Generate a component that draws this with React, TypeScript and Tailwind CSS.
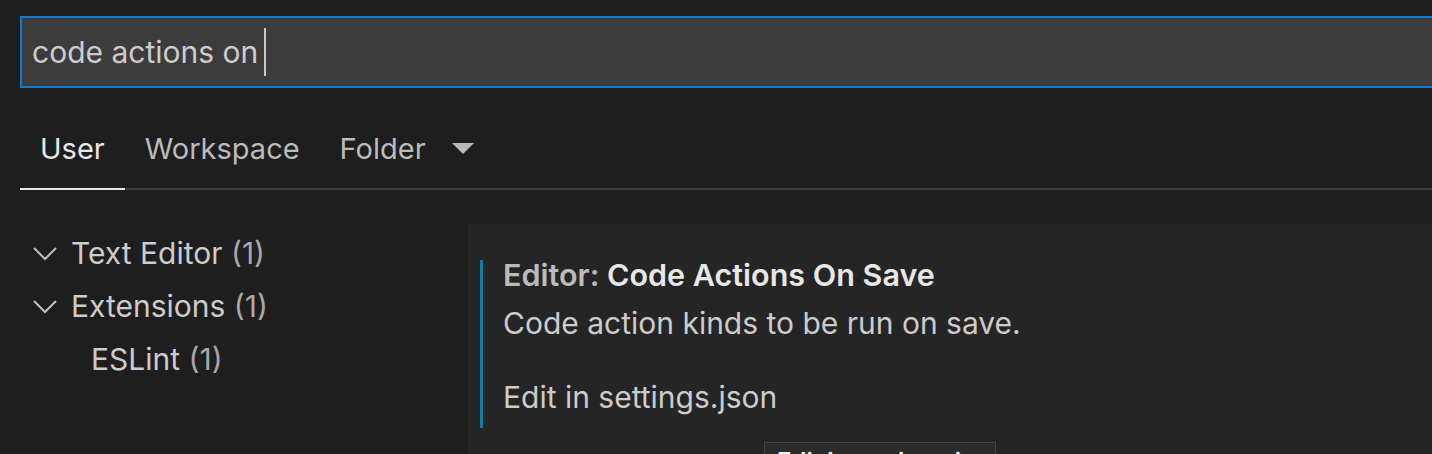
export default function App() {
  return (
    <div className="relative w-[1432px] h-[454px] overflow-hidden bg-[#1e1e1e] font-['Inter','Noto_Sans',sans-serif] text-[#cccccc]">
      {/* search */}
      <div className="pt-4 pl-5">
        <div className="flex h-[72px] w-[1430px] items-center border-2 border-[#0e7ad3] bg-[#3c3c3c] pl-[10px]">
          <span className="text-[30px] text-[#cccccc]">code actions on</span>
          <span className="ml-[6px] h-[48px] w-[2px] bg-[#c8c8c8]"></span>
        </div>
      </div>

      {/* tabs */}
      <div className="ml-5 mt-[22px] flex border-b-2 border-[#3a3a3a]">
        <div className="-mb-[2px] flex h-[80px] items-center border-b-2 border-[#e7e7e7] px-5 text-[29px] text-[#e7e7e7]">User</div>
        <div className="flex h-[78px] items-center px-5 text-[29px] text-[#bbbbbb]">Workspace</div>
        <div className="flex h-[78px] items-center pl-5 text-[29px] text-[#bbbbbb]">
          Folder
          <svg className="ml-[26px]" width="22" height="12" viewBox="0 0 22 12">
            <path d="M0 0 L22 0 L11 11 Z" fill="#bbbbbb" />
          </svg>
        </div>
      </div>

      {/* body */}
      <div className="flex">
        <div className="w-[468px] shrink-0 pt-[37px] text-[30px]">
          <div className="flex h-[53px] items-center">
            <svg className="ml-[33px] mr-[14px]" width="24" height="14" viewBox="0 0 24 14">
              <path d="M1 1 L12 12 L23 1" fill="none" stroke="#c0c0c0" strokeWidth="2" />
            </svg>
            <span>Text Editor <span className="text-[#a8a8a8]">(1)</span></span>
          </div>
          <div className="flex h-[53px] items-center">
            <svg className="ml-[33px] mr-[14px]" width="24" height="14" viewBox="0 0 24 14">
              <path d="M1 1 L12 12 L23 1" fill="none" stroke="#c0c0c0" strokeWidth="2" />
            </svg>
            <span>Extensions <span className="text-[#a8a8a8]">(1)</span></span>
          </div>
          <div className="flex h-[53px] items-center pl-[91px]">
            <span>ESLint <span className="text-[#a8a8a8]">(1)</span></span>
          </div>
        </div>

        <div className="mt-[34px] h-[240px] flex-1 bg-[#252526] pl-3 pt-9">
          <div className="flex">
            <div className="w-[3px] bg-[#0f7ea3]"></div>
            <div className="pl-5 pb-4 text-[30px]">
              <div className="flex h-[30px] items-center text-[30.5px] font-semibold">
                <span className="text-[#bbbbbb]">Editor:&nbsp;</span>
                <span className="text-[#e7e7e7]">Code Actions On Save</span>
              </div>
              <div className="mt-[18px] flex h-[30px] items-center">Code action kinds to be run on save.</div>
              <div className="mt-[44px] flex h-[30px] items-center">Edit in settings.json</div>
            </div>
          </div>
        </div>
      </div>

      {/* tooltip */}
      <div className="absolute left-[764px] top-[442px] h-[40px] w-[232px] overflow-hidden whitespace-nowrap border border-[#454545] bg-[#2b2b2b] pl-[12px] pt-[7px] text-[24px] font-semibold leading-none text-[#f0f0f0]">
        Edit in settings.json
      </div>
    </div>
  );
}
